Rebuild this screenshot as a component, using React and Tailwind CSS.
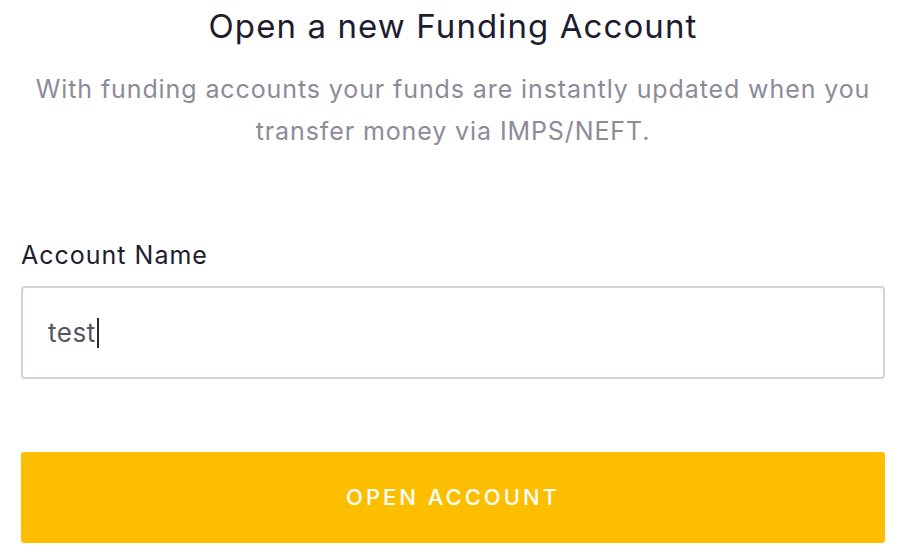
import React, { useState } from "react";

const App = () => {
  const [name, setName] = useState("test");

  return (
    <div className="w-[906px] h-[554px] bg-white px-[21px] font-['Inter','Lato',sans-serif] overflow-hidden">
      <h1 className="pt-[4px] text-center text-[33px] leading-[44px] tracking-[1.1px] text-[#1e1c2f]">
        Open a new Funding Account
      </h1>
      <p className="mt-[20px] text-center text-[25px] leading-[42px] tracking-[0.9px] text-[#8c8b98]">
        With funding accounts your funds are instantly updated when you
        <br />
        transfer money via IMPS/NEFT.
      </p>
      <label className="block mt-[87px] text-[25px] leading-[32px] tracking-[1px] text-[#1e1c2f]">
        Account Name
      </label>
      <div className="mt-[15px] h-[93px] border-2 border-[#d2d1dc] rounded-[4px] flex items-center px-[25px]">
        <span className="text-[26px] tracking-[0.5px] text-[#55545f]">{name}</span>
        <span className="w-[2px] h-[30px] bg-[#2a2a33] ml-[1px]" />
      </div>
      <button
        type="button"
        onClick={() => setName(name)}
        className="mt-[73px] w-full h-[91px] pb-[1px] bg-[#fdbe00] rounded-[3px] text-white text-[22px] tracking-[3px] font-medium"
      >
        OPEN ACCOUNT
      </button>
    </div>
  );
};

export default App;
